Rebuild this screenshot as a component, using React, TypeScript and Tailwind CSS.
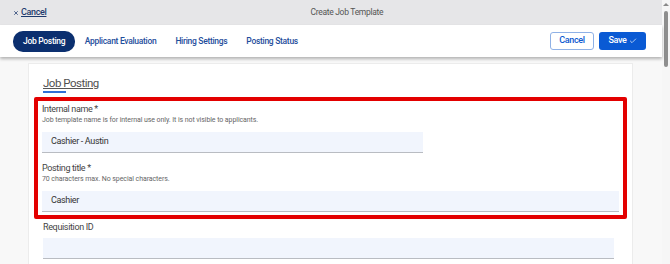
import { Check, X } from "lucide-react";

const tabs = ["Job Posting", "Applicant Evaluation", "Hiring Settings", "Posting Status"];

function Field({
  label,
  help,
  value,
  width,
}: {
  label: string;
  help?: string;
  value: string;
  width: string;
}) {
  return (
    <div className="flex flex-col">
      <div className="text-[9px] leading-[11px] tracking-[-0.35px] text-[#444]">{label}</div>
      {help && <div className="mt-[1px] text-[7px] leading-[9px] tracking-[-0.08px] text-[#666]">{help}</div>}
      <div
        className={`${width} mt-[7px] flex h-[21px] items-center border-b border-[#b9bcc2] bg-[#f1f5fd] px-[9px] text-[9px] tracking-[-0.35px] text-[#333]`}
      >
        {value}
      </div>
    </div>
  );
}

export default function App() {
  return (
    <div className="flex h-[264px] w-[670px] overflow-hidden bg-[#f8f8f8] font-['Roboto',sans-serif]">
      <div className="flex flex-1 flex-col">
        <div className="flex h-[25px] items-center bg-[#e6e6e8] px-[13px]">
          <a className="flex items-center text-[9px] font-medium tracking-[-0.35px] text-[#1e3a6d] underline">
            <X className="mr-[2px] h-[6px] w-[6px]" strokeWidth={3} />
            Cancel
          </a>
          <span className="ml-[264px] text-[8.5px] tracking-[-0.3px] text-[#555]">Create Job Template</span>
        </div>

        <div className="relative z-10 flex h-[32px] items-center bg-white pl-[13px] pr-[16px] shadow-[0_2px_3px_rgba(0,0,0,0.28)]">
          {tabs.map((t, i) =>
            i === 0 ? (
              <div
                key={t}
                className="flex h-[21px] items-center rounded-[10px] bg-[#0b2f6f] px-[10px] text-[8.5px] font-medium tracking-[-0.3px] text-white"
              >
                {t}
              </div>
            ) : (
              <div key={t} className="px-[9.5px] text-[8.5px] font-medium tracking-[-0.3px] text-[#1f4e9c]">
                {t}
              </div>
            )
          )}
          <div className="ml-auto flex gap-[5px]">
            <button className="flex h-[18px] w-[44px] items-center justify-center rounded-[3px] border border-[#8fb1e6] bg-white text-[9px] font-medium tracking-[-0.35px] text-[#0c5ad0]">
              Cancel
            </button>
            <button className="flex h-[18px] w-[47px] items-center justify-center gap-[2px] rounded-[3px] bg-[#0a5ad4] text-[9px] font-medium tracking-[-0.35px] text-white">
              Save
              <Check className="h-[8px] w-[8px]" strokeWidth={2} />
            </button>
          </div>
        </div>

        <div className="flex flex-1 pl-[28px] pr-[29px] pt-[6px]">
          <div className="flex flex-1 flex-col border-l border-r border-t border-[#ececec] bg-white pl-[5px] pr-[5px]">
            <div className="ml-[9px] mt-[13px] flex w-fit flex-col">
              <span className="text-[11.5px] leading-[12px] tracking-[-0.5px] text-[#505050] underline decoration-[#555] underline-offset-[1px]">
                Job Posting
              </span>
              <div className="mt-[2px] h-[1.5px] w-[23px] bg-[#2f6fd6]" />
            </div>

            <div className="mt-[4px] flex flex-col rounded-[2px] border-[4px] border-[#e30000] px-[4px] pb-[3px] pt-[3px]">
              <Field
                label="Internal name *"
                help="Job template name is for internal use only. It is not visible to applicants."
                value="Cashier - Austin"
                width="w-[381px]"
              />
              <div className="mt-[10px]">
                <Field
                  label="Posting title *"
                  help="70 characters max. No special characters."
                  value="Cashier"
                  width="w-full"
                />
              </div>
            </div>

            <div className="ml-[9px] mr-[13px] mt-[3px]">
              <div className="text-[9px] leading-[11px] tracking-[-0.35px] text-[#444]">Requisition ID</div>
              <div className="mt-[5px] h-[21px] w-full border-b border-[#b9bcc2] bg-[#f1f5fd]" />
            </div>
          </div>
        </div>
      </div>

      <div className="flex w-[8px] flex-col items-center bg-[#f6f6f6]">
        <div className="mt-[3px] h-0 w-0 border-x-[3px] border-b-[3px] border-x-transparent border-b-[#8a8a8a]" />
        <div className="mt-[5px] h-[56px] w-[4px] rounded-full bg-[#8e8e8e]" />
      </div>
    </div>
  );
}
